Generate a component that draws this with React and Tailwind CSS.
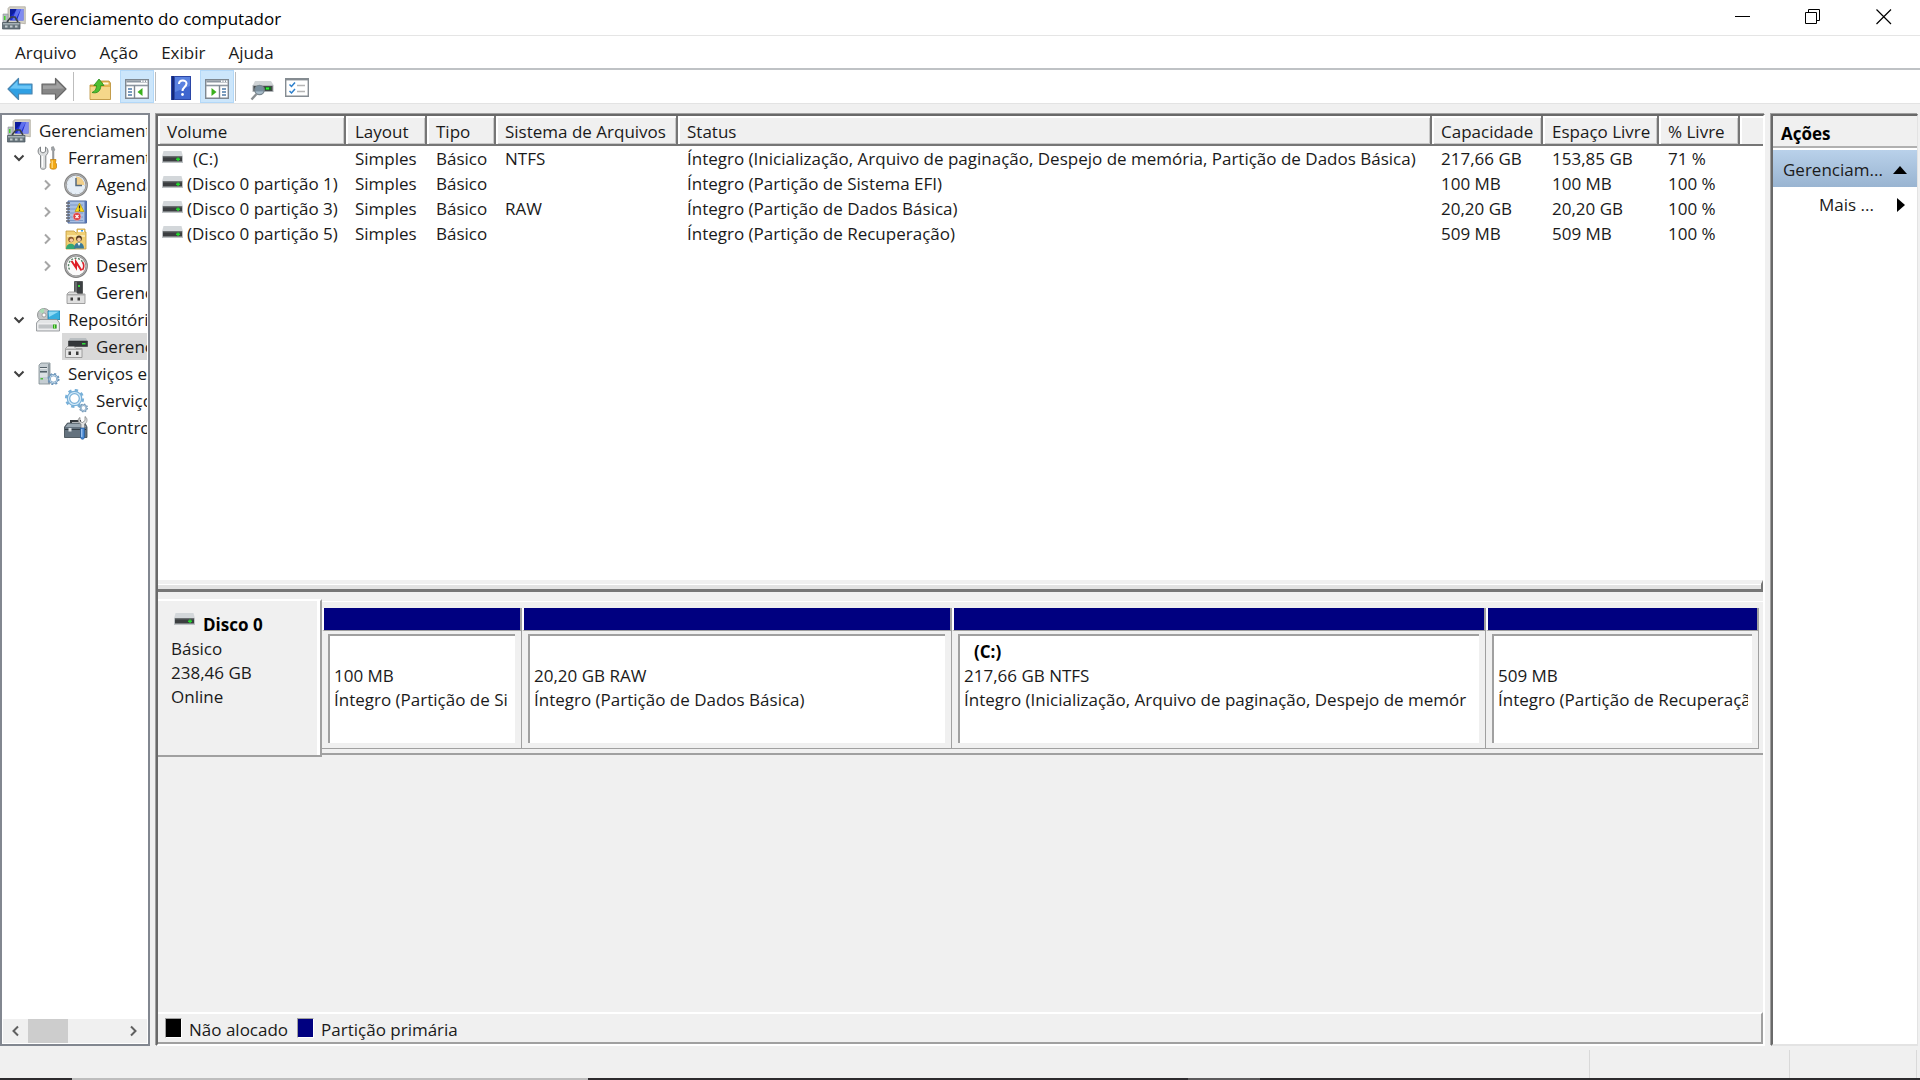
import React from 'react';

function ComputerIcon() {
  return (
    <svg viewBox="0 0 24 24" className="h-6 w-6 shrink-0" aria-hidden="true">
      <path d="M6 2.500 7.500 .8h15.800v17L18 17H6z" fill="#d3d0c6" stroke="#a8a498" strokeWidth=".7" />
      <path d="M8 3h13.500v11.500H8z" fill="#1c2bd6" />
      <path d="M8 3h8L8 11z" fill="#0d1c9c" />
      <path d="M14.500 3h4.500l-6 11.500H10z" fill="#6f82f2" opacity=".8" />
      <path d="M19 3h2.500v11.500H15z" fill="#a9b5fb" opacity=".7" />
      <path d="M1 8h5v9H1z" fill="#b5bcc0" stroke="#8b9296" strokeWidth=".6" />
      <path d="M2 10h1.500v4H2z" fill="#45d52c" />
      <path d="m5 16 4-5h4l3 5" fill="none" stroke="#3c4247" strokeWidth="1.600" />
      <path d="M.5 16.500h17.500v6.500H.5z" fill="#68767d" stroke="#46525a" strokeWidth=".7" />
      <path d="M1 17h16.500v1.500H1z" fill="#a5b1b6" />
      <path d="M3 19.500h2.500v2H3zM8 19.500h2.500v2H8zM13 19.500h2.500v2H13z" fill="#c2cacd" />
    </svg>
  );
}

function ToolsIcon() {
  return (
    <svg viewBox="0 0 24 24" className="h-6 w-6 shrink-0" aria-hidden="true">
      <path d="M4.500 1v4.500l2.500 1.500 2.500-1.500V1c3 1.500 3.500 6.500 .3 8.500V21.500c0 2.300-5.300 2.300-5.300 0V9.500C1.200 7.500 1.500 2.500 4.500 1z" fill="#dcdedf" stroke="#7d8184" strokeWidth="1" />
      <path d="M6.500 10v11" stroke="#fff" strokeWidth="1.200" />
      <path d="m15.500 1 2-.5 1.500 3.500-1 1v9h-1.500V5l-1-1z" fill="#9da2a6" stroke="#777" strokeWidth=".4" />
      <path d="M14.500 13.500h5.500l-.5 3 1 1.500v3.500c0 2.300-6.500 2.300-6.500 0V18l1-1.500z" fill="#f3a916" stroke="#bd7a07" strokeWidth=".7" />
      <path d="M16.200 14.500V22" stroke="#ffe08b" strokeWidth="1.200" />
    </svg>
  );
}

function ClockIcon() {
  return (
    <svg viewBox="0 0 24 24" className="h-6 w-6 shrink-0" aria-hidden="true">
      <circle cx="12" cy="12" r="10.700" fill="#e6eef6" stroke="#858585" strokeWidth="2.400" />
      <circle cx="12" cy="12" r="10.500" fill="none" stroke="#c6c6c6" strokeWidth=".7" />
      <path d="M12 3.500a8.500 8.500 0 0 1 8.500 8.500H12z" fill="#f1cf8a" />
      <circle cx="12" cy="12" r="8.500" fill="none" stroke="#b9c6d4" strokeWidth=".8" strokeDasharray="1 3.450" />
      <path d="M12 5v7.500h6" fill="none" stroke="#55697d" strokeWidth="1.500" />
    </svg>
  );
}

function EventIcon() {
  return (
    <svg viewBox="0 0 24 24" className="h-6 w-6 shrink-0" aria-hidden="true">
      <path d="M4 1h18.500v22H4z" fill="#a7bfe3" stroke="#4a669c" strokeWidth="1" />
      <path d="M20.500 1h2v22h-2z" fill="#5674b5" />
      <path d="M6 5h13M6 9h13M6 13h13M6 17h13M6 20.500h13" stroke="#7591c2" strokeWidth=".8" />
      <path d="M2 3h4M2 6h4M2 9h4M2 12h4M2 15h4M2 18h4M2 21h4" stroke="#63666e" strokeWidth="1.300" />
      <path d="m15.500 3 4.500 8.500h-9z" fill="#ffdc18" stroke="#b29200" strokeWidth=".6" />
      <path d="M15.500 5.500v3M15.500 9.500v1.200" stroke="#222" strokeWidth="1.300" />
      <circle cx="13" cy="16.500" r="4" fill="#dc3b42" stroke="#f2c3c5" strokeWidth=".6" />
      <path d="m11.500 15 3 3m0-3-3 3" stroke="#fff" strokeWidth="1.200" />
    </svg>
  );
}

function SharedFoldersIcon() {
  return (
    <svg viewBox="0 0 24 24" className="h-6 w-6 shrink-0" aria-hidden="true">
      <path d="M2 4h8l2 2h1V2h8v3h1v17H2z" fill="#f0cf74" stroke="#c29a3a" strokeWidth=".8" />
      <path d="M14 3h6v2h-6z" fill="#fff" />
      <path d="M17 3h2v1.500h-2z" fill="#3598dc" />
      <path d="M3 8h18v2H3z" fill="#fae6a8" />
      <circle cx="7" cy="12.500" r="2.800" fill="#8b572e" />
      <circle cx="7.400" cy="13.300" r="1.800" fill="#f2c7a0" />
      <path d="M2 22c0-7 9.500-7 9.500 0z" fill="#35a873" />
      <circle cx="15" cy="11.500" r="2.900" fill="#50361f" />
      <circle cx="15" cy="12.500" r="1.900" fill="#f2c7a0" />
      <path d="M10 21.500c0-8 10-8 10 0z" fill="#3b7a99" />
      <path d="m13.500 16 1.500 3 1.500-3z" fill="#fff" />
    </svg>
  );
}

function PerformanceIcon() {
  return (
    <svg viewBox="0 0 24 24" className="h-6 w-6 shrink-0" aria-hidden="true">
      <circle cx="12" cy="12" r="10.700" fill="#fbfbfb" stroke="#808080" strokeWidth="2.400" />
      <circle cx="12" cy="12" r="10.500" fill="none" stroke="#c9c9c9" strokeWidth=".7" />
      <path d="M5.500 15.500A7.500 7.500 0 0 1 18.500 8" fill="none" stroke="#568263" strokeWidth="1.400" strokeDasharray="2 1.500" />
      <path d="M18.500 8a7.500 7.500 0 0 1 0 8" fill="none" stroke="#d9232c" strokeWidth="1.600" />
      <path d="m7.500 7 4.500 6.500V8l5.500 8.500" fill="none" stroke="#df1e28" strokeWidth="2" />
    </svg>
  );
}

function DeviceIcon() {
  return (
    <svg viewBox="0 0 24 24" className="h-6 w-6 shrink-0" aria-hidden="true">
      <path d="M10.500.5h8v12h-8z" fill="#3d4043" stroke="#25282a" strokeWidth=".6" />
      <path d="M11 1h2v11h-2z" fill="#686c6e" />
      <path d="M14 4h2v2h-2z" fill="#35d83a" />
      <path d="m3 13 2-2h7l2 2h7v9.500H3z" fill="#dfdfdf" stroke="#8d8d8d" strokeWidth=".8" />
      <path d="M3 13h18v1.500H3z" fill="#aaa" />
      <path d="M6.500 16.500h2.500v3H6.500zM13.500 16.500H16v3h-2.500z" fill="#3b3b3b" />
    </svg>
  );
}

function StorageIcon() {
  return (
    <svg viewBox="0 0 24 24" className="h-6 w-6 shrink-0" aria-hidden="true">
      <circle cx="8" cy="7" r="6.500" fill="#c3c6c6" stroke="#8b8f8f" strokeWidth=".9" />
      <path d="M8 7 3 3a6.500 6.500 0 0 1 5-2.500z" fill="#a8dcb4" />
      <circle cx="8" cy="7" r="2" fill="#fff" stroke="#888" strokeWidth=".7" />
      <path d="M12 3h12v8.500H12z" fill="#38aede" stroke="#187aa4" strokeWidth=".8" />
      <path d="M12.500 3.500H23L13 9z" fill="#8fdaf5" />
      <path d="m2 13 2-1.500h17L23.500 15v8H.5v-8z" fill="#e3e5e6" stroke="#888c8f" strokeWidth=".8" />
      <path d="M2 16h19.500v5H2z" fill="#c0c4c6" stroke="#fff" strokeWidth=".7" />
      <path d="M17 16.500h3.500v4H17z" fill="#2ba51d" />
      <path d="M18 16.500h1v4h-1z" fill="#98f06f" />
    </svg>
  );
}

function DiskManagementIcon() {
  return (
    <svg viewBox="0 0 24 24" className="h-6 w-6 shrink-0" aria-hidden="true">
      <path d="M6 3h16l1.500 3H4.500z" fill="#b9bec1" />
      <path d="M4.500 6h19v5.500h-19z" fill="#34373a" stroke="#202224" strokeWidth=".5" />
      <path d="M18 8h3.500v1.500H18z" fill="#2fe03a" />
      <path d="m1.500 13.500 2-2H10l2 2h6v9H1.500z" fill="#e6e6e6" stroke="#8d8d8d" strokeWidth=".8" />
      <path d="M1.500 13.500H18V15H1.500z" fill="#aaa" />
      <path d="M4.500 16.500H7v3.500H4.500zM12 16.500h2.500V20H12z" fill="#3b3b3b" />
    </svg>
  );
}

function Gear({ x, y, r, color }) {
  return (
    <g fill="none" stroke={color}>
      <circle cx={x} cy={y} r={r} strokeWidth={r * 0.6} />
      <circle cx={x} cy={y} r={r * 1.4} strokeWidth={r * 0.4} strokeDasharray={`${r * 0.55} ${r * 0.55}`} />
      <circle cx={x} cy={y} r={r} stroke="#d5eaf8" strokeWidth={r * 0.2} />
    </g>
  );
}

function ServerGearIcon() {
  return (
    <svg viewBox="0 0 24 24" className="h-6 w-6 shrink-0" aria-hidden="true">
      <path d="m3 3 2-2h9v21H3z" fill="#c5cdd2" stroke="#7f8a91" strokeWidth=".8" />
      <path d="M12 2h2v20h-2z" fill="#909ba2" />
      <path d="M4 5h7v1.500H4zM4 9h7v1.500H4z" fill="#536068" />
      <path d="M4 6.500h7M4 12h7M4 14h7" stroke="#fff" strokeWidth=".8" />
      <path d="M4.500 16H7v1.500H4.500z" fill="#4dbb3a" />
      <Gear x={17.5} y={17} r={3.8} color="#6b94b9" />
    </svg>
  );
}

function GearsIcon() {
  return (
    <svg viewBox="0 0 24 24" className="h-6 w-6 shrink-0" aria-hidden="true">
      <Gear x={10.5} y={9.5} r={6} color="#78b0d8" />
      <Gear x={19.5} y={19} r={2.8} color="#7095b5" />
    </svg>
  );
}

function ToolboxIcon() {
  return (
    <svg viewBox="0 0 24 24" className="h-6 w-6 shrink-0" aria-hidden="true">
      <path d="M7 8V5h9v3" fill="none" stroke="#33383c" strokeWidth="2" />
      <path d="m.5 11 3-4H21l2 4v10.500H.5z" fill="#64727e" stroke="#3b454d" strokeWidth=".8" />
      <path d="m1.500 11 2.500-3.300h16L22 11z" fill="#99a7b1" />
      <path d="M1 13h21v1H1z" fill="#303a42" />
      <path d="M4.500 12h3v3.500h-3z" fill="#dbe1e5" />
      <path d="M16 1.500v4l2.500 1 2.500-2V.5c3 2 2.500 6-.5 7.500v5h-3.500V8C14 7 13 3 16 1.500z" fill="#e0e2e3" stroke="#777" strokeWidth=".7" />
      <path d="M16.500 12h4v9c0 3-4 3-4 0z" fill="#4787d2" stroke="#245796" strokeWidth=".7" />
      <path d="M17.800 13v8" stroke="#b9d8fa" strokeWidth="1" />
    </svg>
  );
}

function DriveIcon() {
  return (
    <svg viewBox="0 0 21 12" className="h-3 w-[21px] shrink-0" aria-hidden="true">
      <path d="M1.500 0h18L21 5.500H0z" fill="#d3d7da" />
      <path d="M0 5h21v7H0z" fill="#bdc1c4" />
      <path d="M1 5.500h19v5H1z" fill="#3b3e40" />
      <path d="M1 5.500h19v1H1z" fill="#5c6062" />
      <path d="M14 7.500h4v1.500h-4zM15.300 6.500h1.500v3.500h-1.500z" fill="#23d52c" />
    </svg>
  );
}

function BackIcon() {
  return (
    <svg viewBox="0 0 26 24" className="h-6 w-[26px]" aria-hidden="true">
      <path d="M1 12 11.500 1.500v5.500H25v10H11.500v5.500z" fill="#2fa0e4" stroke="#4c86b0" strokeWidth="1.200" strokeLinejoin="round" />
      <path d="M3 11.500 10.500 4v4.500H24V12z" fill="#6cc6f6" />
    </svg>
  );
}

function ForwardIcon() {
  return (
    <svg viewBox="0 0 26 24" className="h-6 w-[26px]" aria-hidden="true">
      <path d="M25 12 14.500 1.500v5.500H1v10h13.500v5.500z" fill="#868686" stroke="#686868" strokeWidth="1.200" strokeLinejoin="round" />
      <path d="M23 11.500 15.500 4v4.500H2V12z" fill="#a2a2a2" />
    </svg>
  );
}

function FolderUpIcon() {
  return (
    <svg viewBox="0 0 24 24" className="h-6 w-6" aria-hidden="true">
      <path d="M2 8h8l2-4h9l1.500 2v16.500H2z" fill="#e3b554" stroke="#b98d34" strokeWidth=".8" />
      <path d="M15 5.500h5.500v2H15z" fill="#fff8dd" />
      <path d="M2.500 10H22v12H2.500z" fill="#f5d78a" />
      <path d="M4 15.500c3-1 4.500-3.500 4.500-7H5.800l5.200-6.500 5 6.500h-3.200c0 5-3 8.500-8.800 7z" fill="#4dbf32" stroke="#2a8c1a" strokeWidth=".8" />
    </svg>
  );
}

// Console window with a side pane, the arrow sits in the other half
function PaneIcon({ side }) {
  return (
    <svg viewBox="0 0 24 20" className="h-5 w-6" aria-hidden="true">
      <path d="M.7.7h22.600v18.600H.7z" fill="#fff" stroke="#7e8790" strokeWidth="1.400" />
      <path d="M1.500 1.500h21v2h-21z" fill="#8d97a1" />
      <path d="M16 1.500h1.500v1.500H16zM18.500 1.500H20v1.500h-1.500zM21 1.500h1.300v1.500H21z" fill="#fff" />
      <path d="M1 6.500h22" stroke="#8d97a1" strokeWidth="1.600" />
      {side === 'left' ? (
        <>
          <path d="M9.500 6.500v13" stroke="#7e8790" strokeWidth="1.400" />
          <path d="M3 10h4M3 13h4M3 16h4" stroke="#4d7ba8" strokeWidth="1.500" />
          <path d="M17.500 9v8L12.500 13z" fill="#3bb11d" />
        </>
      ) : (
        <>
          <path d="M14.500 6.500v13" stroke="#7e8790" strokeWidth="1.400" />
          <path d="M17 10h4M17 13h4M17 16h4" stroke="#4d7ba8" strokeWidth="1.500" />
          <path d="M6.500 9v8l5-4z" fill="#3bb11d" />
        </>
      )}
    </svg>
  );
}

function HelpIcon() {
  return (
    <svg viewBox="0 0 20 24" className="h-6 w-5" aria-hidden="true">
      <path d="M0 0h20v24H0z" fill="#2b46a6" />
      <path d="M4 1h15v22H4z" fill="#3f66cf" />
      <path d="M4 1h15v9L4 16z" fill="#5a82e0" />
      <path d="M1 0h2v24H1z" fill="#15297a" />
      <path d="M8 8c0-4.500 7.500-4.500 7.500-.5 0 3.500-4 3.500-4 7.500" fill="none" stroke="#fff" strokeWidth="2" />
      <circle cx="11.500" cy="18.500" r="1.400" fill="#fff" />
    </svg>
  );
}

function DriveSearchIcon() {
  return (
    <svg viewBox="0 0 24 24" className="h-6 w-6" aria-hidden="true">
      <path d="M5 4h16l2.500 4H3z" fill="#d0d4d6" />
      <path d="M2.500 8h21v7h-21z" fill="#aeb3b6" />
      <path d="M3.500 9h19v5h-19z" fill="#45494b" />
      <path d="M15 10h6v3h-6z" fill="#136d1a" />
      <path d="M16 10.500h3v2h-3z" fill="#32ed3d" />
      <circle cx="9.500" cy="13" r="4.700" fill="#8ba6b8" fillOpacity=".75" stroke="#78868f" strokeWidth="1.300" />
      <path d="m6.500 17-5 5.500" stroke="#8a8f92" strokeWidth="2.400" />
    </svg>
  );
}

function ChecklistIcon() {
  return (
    <svg viewBox="0 0 24 19" className="h-[19px] w-6" aria-hidden="true">
      <path d="M.7.7h22.600v17.600H.7z" fill="#fff" stroke="#858c92" strokeWidth="1.400" />
      <path d="M1 1.500h22" stroke="#858c92" strokeWidth="1.800" />
      <path d="m4.500 6.500 2 2 3.500-4M4.500 13l2 2 3.500-4" fill="none" stroke="#2d7fcb" strokeWidth="1.500" />
      <path d="M12 7.500h8M12 13.500h8" stroke="#b5b5b5" strokeWidth="1.400" />
    </svg>
  );
}

function Chevron({ open }) {
  return open ? (
    <svg viewBox="0 0 12 12" className="h-3 w-3" aria-hidden="true">
      <path d="m1.500 3.500 4.500 4.500 4.500-4.500" fill="none" stroke="#404040" strokeWidth="2" />
    </svg>
  ) : (
    <svg viewBox="0 0 12 12" className="h-3 w-3" aria-hidden="true">
      <path d="m4 1.500 4.500 4.500L4 10.500" fill="none" stroke="#a6a6a6" strokeWidth="2" />
    </svg>
  );
}

const tree = [
  { label: 'Gerenciamento do computador', icon: ComputerIcon, level: 0 },
  { label: 'Ferramentas do sistema', icon: ToolsIcon, level: 1, open: true },
  { label: 'Agendador de tarefas', icon: ClockIcon, level: 2, open: false },
  { label: 'Visualizar eventos', icon: EventIcon, level: 2, open: false },
  { label: 'Pastas compartilhadas', icon: SharedFoldersIcon, level: 2, open: false },
  { label: 'Desempenho', icon: PerformanceIcon, level: 2, open: false },
  { label: 'Gerenciador de dispositivos', icon: DeviceIcon, level: 2 },
  { label: 'Repositório', icon: StorageIcon, level: 1, open: true },
  { label: 'Gerenciamento de disco', icon: DiskManagementIcon, level: 2, selected: true },
  { label: 'Serviços e aplicativos', icon: ServerGearIcon, level: 1, open: true },
  { label: 'Serviços', icon: GearsIcon, level: 2 },
  { label: 'Controle WMI', icon: ToolboxIcon, level: 2 },
];

const indents = ['pl-0.5', 'pl-[5px]', 'pl-[33px]'];

const columns = ['Volume', 'Layout', 'Tipo', 'Sistema de Arquivos', 'Status', 'Capacidade', 'Espaço Livre', '% Livre'];

const volumes = [
  { name: '(C:)', letter: true, fs: 'NTFS', status: 'Íntegro (Inicialização, Arquivo de paginação, Despejo de memória, Partição de Dados Básica)', size: '217,66 GB', free: '153,85 GB', pct: '71 %' },
  { name: '(Disco 0 partição 1)', fs: '', status: 'Íntegro (Partição de Sistema EFI)', size: '100 MB', free: '100 MB', pct: '100 %' },
  { name: '(Disco 0 partição 3)', fs: 'RAW', status: 'Íntegro (Partição de Dados Básica)', size: '20,20 GB', free: '20,20 GB', pct: '100 %' },
  { name: '(Disco 0 partição 5)', fs: '', status: 'Íntegro (Partição de Recuperação)', size: '509 MB', free: '509 MB', pct: '100 %' },
];

const partitions = [
  { name: '', size: '100 MB', status: 'Íntegro (Partição de Si', grow: 200 },
  { name: '', size: '20,20 GB RAW', status: 'Íntegro (Partição de Dados Básica)', grow: 430 },
  { name: '(C:)', size: '217,66 GB NTFS', status: 'Íntegro (Inicialização, Arquivo de paginação, Despejo de memór', grow: 534 },
  { name: '', size: '509 MB', status: 'Íntegro (Partição de Recuperaçã', grow: 273 },
];

function TitleBar() {
  return (
    <header className="flex h-9 items-center border-b border-[#e5e5e5] bg-white pl-0.5">
      <ComputerIcon />
      <h1 className="ml-[5px] flex-1 pt-0.5 text-black">Gerenciamento do computador</h1>
      <div className="flex h-full items-center pb-0.5">
        <button aria-label="Minimizar" className="flex w-[70px] justify-center">
          <svg viewBox="0 0 16 16" className="h-4 w-4"><path d="M0 7.500h15" stroke="#000" /></svg>
        </button>
        <button aria-label="Restaurar" className="flex w-[70px] justify-center">
          <svg viewBox="0 0 16 16" className="h-4 w-4"><path d="M.5 3.500h11v11H.5zM3.500 3.500v-3h11v11h-3" fill="none" stroke="#000" /></svg>
        </button>
        <button aria-label="Fechar" className="flex w-[72px] justify-center">
          <svg viewBox="0 0 16 16" className="h-4 w-4"><path d="m.5.500 14.500 14.500m0-14.500-14.500 14.500" stroke="#000" strokeWidth="1.200" /></svg>
        </button>
      </div>
    </header>
  );
}

function MenuBar() {
  return (
    <nav className="flex h-[34px] items-center gap-[23px] border-b-2 border-[#bfc2c5] bg-white pt-0.5 pl-[15px]">
      {['Arquivo', 'Ação', 'Exibir', 'Ajuda'].map((item) => (
        <button key={item}>{item}</button>
      ))}
    </nav>
  );
}

function Toolbar() {
  return (
    <div className="flex h-[34px] items-stretch border-b border-[#e3e3e3] bg-white pl-[7px]">
      <button aria-label="Voltar" className="flex items-center pt-1"><BackIcon /></button>
      <button aria-label="Avançar" className="ml-2 flex items-center pt-1"><ForwardIcon /></button>
      <div className="mx-[6px] my-0.5 w-px bg-[#bdbdbd]" />
      <button aria-label="Subir um nível" className="ml-2 flex items-center pt-1"><FolderUpIcon /></button>
      <button aria-label="Mostrar árvore" className="ml-2 flex w-[34px] items-center justify-center border border-[#b3d8f8] bg-[#cce6fb] pt-1"><PaneIcon side="left" /></button>
      <div className="ml-px my-0.5 w-px bg-[#bdbdbd]" />
      <button aria-label="Ajuda do console" className="ml-[15px] flex items-center pt-0.5"><HelpIcon /></button>
      <button aria-label="Mostrar ações" className="ml-[9px] flex w-[34px] items-center justify-center border border-[#b3d8f8] bg-[#cce6fb] pt-1"><PaneIcon side="right" /></button>
      <div className="ml-px my-0.5 w-px bg-[#bdbdbd]" />
      <button aria-label="Examinar discos" className="ml-3.5 flex items-center pt-1"><DriveSearchIcon /></button>
      <button aria-label="Propriedades" className="ml-[11px] flex items-center pt-0.5"><ChecklistIcon /></button>
    </div>
  );
}

function ConsoleTree() {
  return (
    <aside className="flex w-[150px] shrink-0 flex-col border-2 border-[#828790] bg-white p-px">
      <ul className="flex-1 overflow-hidden pt-px">
        {tree.map(({ label, icon: Icon, level, open, selected }, index) => (
          <li key={index}>
            <button className={`flex h-[27px] w-full items-center overflow-hidden text-left ${indents[level]}`}>
              {level > 0 && (
                <span className="flex w-[26px] shrink-0 pl-[5px]">
                  {open !== undefined && <Chevron open={open} />}
                </span>
              )}
              <span className={`flex h-full min-w-0 flex-1 items-center gap-2 pl-0.5 ${selected ? 'bg-[#d9d9d9]' : ''}`}>
                <Icon />
                <span className="overflow-hidden whitespace-nowrap">{label}</span>
              </span>
            </button>
          </li>
        ))}
      </ul>
      <div className="flex h-6 items-center bg-[#f0f0f0]">
        <button aria-label="Rolar para a esquerda" className="flex w-[25px] justify-center">
          <svg viewBox="0 0 12 12" className="h-3 w-3"><path d="M8 1.500 3.500 6 8 10.500" fill="none" stroke="#606060" strokeWidth="2" /></svg>
        </button>
        <div className="h-full w-10 bg-[#cdcdcd]" />
        <button aria-label="Rolar para a direita" className="ml-auto flex w-7 justify-center">
          <svg viewBox="0 0 12 12" className="h-3 w-3"><path d="M4 1.500 8.500 6 4 10.500" fill="none" stroke="#606060" strokeWidth="2" /></svg>
        </button>
      </div>
    </aside>
  );
}

function VolumeTable() {
  const th = 'h-[29px] overflow-hidden border-b-2 border-r-2 border-[#767676] bg-[#f0f0f0] pt-1 pl-[9px] text-left font-normal whitespace-nowrap shadow-[inset_2px_2px_0_#fff,inset_-1px_-1px_0_#c8c8c8]';
  const td = 'overflow-hidden pt-px pl-[9px] whitespace-nowrap';
  return (
    <table className="w-full table-fixed border-separate border-spacing-0">
      <colgroup>
        <col className="w-[188px]" />
        <col className="w-[81px]" />
        <col className="w-[69px]" />
        <col className="w-[182px]" />
        <col />
        <col className="w-[111px]" />
        <col className="w-[116px]" />
        <col className="w-[81px]" />
        <col className="w-[23px]" />
      </colgroup>
      <thead>
        <tr>
          {columns.map((column) => (
            <th key={column} scope="col" className={th}>{column}</th>
          ))}
          <td className="border-b-2 border-[#767676] bg-[#f0f0f0] shadow-[inset_2px_2px_0_#fff]" />
        </tr>
      </thead>
      <tbody>
        {volumes.map((volume) => (
          <tr key={volume.name} className="h-[25px]">
            <td className="overflow-hidden pt-px pl-1 whitespace-nowrap">
              <span className="flex items-start gap-1">
                <span className="pt-1"><DriveIcon /></span>
                <span className={volume.letter ? 'pl-1.5' : ''}>{volume.name}</span>
              </span>
            </td>
            <td className={td}>Simples</td>
            <td className={td}>Básico</td>
            <td className={td}>{volume.fs}</td>
            <td className={td}>{volume.status}</td>
            <td className={td}>{volume.size}</td>
            <td className={td}>{volume.free}</td>
            <td className={td}>{volume.pct}</td>
            <td />
          </tr>
        ))}
      </tbody>
    </table>
  );
}

function Partition({ partition }) {
  return (
    <div className="flex min-w-0 basis-0 flex-col" style={{ flexGrow: partition.grow }}>
      <div className="h-[23px] border-r-2 border-b border-l-2 border-r-[#a0a0a0] border-b-[#a0a0a0] border-l-white bg-[#000080]" />
      <div className="flex-1 border-r border-b border-[#a0a0a0] pt-[3px] pr-1.5 pb-[5px] pl-1.5">
        <div className="h-full overflow-hidden border-t-2 border-l-2 border-[#a0a0a0] bg-white pt-1 pr-1 pl-1">
          <div className="overflow-hidden leading-6 whitespace-nowrap">
            <p className="h-6 pl-2.5 font-bold text-black">{partition.name}</p>
            <p>{partition.size}</p>
            <p className="overflow-hidden">{partition.status}</p>
          </div>
        </div>
      </div>
    </div>
  );
}

function DiskMap() {
  return (
    <div className="flex pt-[7px]">
      <div className="h-[158px] w-[164px] shrink-0 border-t-2 border-r-2 border-b-2 border-t-white border-r-[#a0a0a0] border-b-[#a0a0a0] pt-3 pl-[13px] leading-6 shadow-[inset_-3px_0_0_#fff]">
        <div className="flex gap-2 pl-[3px]">
          <DriveIcon />
          <h2 className="font-bold text-black">Disco 0</h2>
        </div>
        <p>Básico</p>
        <p>238,46 GB</p>
        <p>Online</p>
      </div>
      <div className="mt-0.5 flex h-[154px] min-w-0 flex-1 border-t border-b-2 border-t-white border-b-[#a0a0a0] pt-1.5 pr-1 pb-1">
        {partitions.map((partition, index) => (
          <Partition key={index} partition={partition} />
        ))}
      </div>
    </div>
  );
}

function Legend() {
  return (
    <div className="mt-auto flex h-8 items-center border-t-2 border-r-2 border-b-2 border-t-white border-r-[#a0a0a0] border-b-[#a0a0a0] pl-[7px]">
      <span className="h-5 w-[17px] border border-t-[#a0a0a0] border-r-white border-b-white border-l-[#a0a0a0] bg-black" />
      <span className="ml-[7px] pt-[3px]">Não alocado</span>
      <span className="ml-[9px] h-5 w-[17px] border border-t-[#a0a0a0] border-r-white border-b-white border-l-[#a0a0a0] bg-[#000080]" />
      <span className="ml-[7px] pt-[3px]">Partição primária</span>
    </div>
  );
}

function ActionsPane() {
  return (
    <aside className="mt-px ml-1.5 flex w-[147px] shrink-0 flex-col border-t-2 border-r border-b-2 border-l-2 border-t-[#696969] border-r-[#e3e3e3] border-b-[#e3e3e3] border-l-[#696969] bg-white shadow-[-1px_-1px_0_#a0a0a0]">
      <h2 className="h-8 border-b-2 border-[#b0b0b0] bg-[#f0f0f0] pt-1.5 pl-2 font-bold text-black">Ações</h2>
      <button className="mt-0.5 flex h-[37px] items-center justify-between bg-linear-to-b from-[#b9d1ea] to-[#99b4d1] pt-0.5 pr-2.5 pl-2.5">
        <span>Gerenciam...</span>
        <svg viewBox="0 0 14 8" className="h-2 w-3.5" aria-hidden="true"><path d="M7 0l7 8H0z" fill="#000" /></svg>
      </button>
      <button className="flex h-9 items-center justify-between pr-3 pl-[46px]">
        <span>Mais ...</span>
        <svg viewBox="0 0 8 14" className="h-3.5 w-2" aria-hidden="true"><path d="M0 0l8 7-8 7z" fill="#000" /></svg>
      </button>
    </aside>
  );
}

export default function App() {
  return (
    <div className="flex min-h-screen flex-col bg-[#f0f0f0] font-['Open_Sans','Noto_Sans',sans-serif] text-[17px] leading-6 text-[#1a1a1a]">
      <TitleBar />
      <MenuBar />
      <Toolbar />
      <main className="flex flex-1 pt-[9px] pr-0.5">
        <ConsoleTree />
        <section className="mt-px ml-1.5 flex min-w-0 flex-1 flex-col border-t-2 border-r-2 border-b-2 border-l-2 border-t-[#696969] border-r-white border-b-white border-l-[#696969] shadow-[-1px_-1px_0_#a0a0a0]">
          <div className="h-[464px] bg-white">
            <VolumeTable />
          </div>
          <div className="h-3 border-t-4 border-r-2 border-b-[3px] border-t-[#f0f0f0] border-r-[#767676] border-b-[#767676] bg-[#e3e3e3] shadow-[inset_0_1px_0_#fff]" />
          <DiskMap />
          <Legend />
        </section>
        <ActionsPane />
      </main>
      <footer className="flex h-8 justify-end pt-1 pr-[3px]">
        <div className="w-[200px] border-l border-[#d9d9d9]" />
        <div className="w-32 border-r border-l border-[#d9d9d9]" />
      </footer>
      <div className="flex h-0.5 bg-[#2d2b2e]">
        <div className="ml-[72px] w-[516px] bg-[#bdbdbd]" />
        <div className="ml-[600px] w-[72px] bg-[#5c5a5c]" />
      </div>
    </div>
  );
}
